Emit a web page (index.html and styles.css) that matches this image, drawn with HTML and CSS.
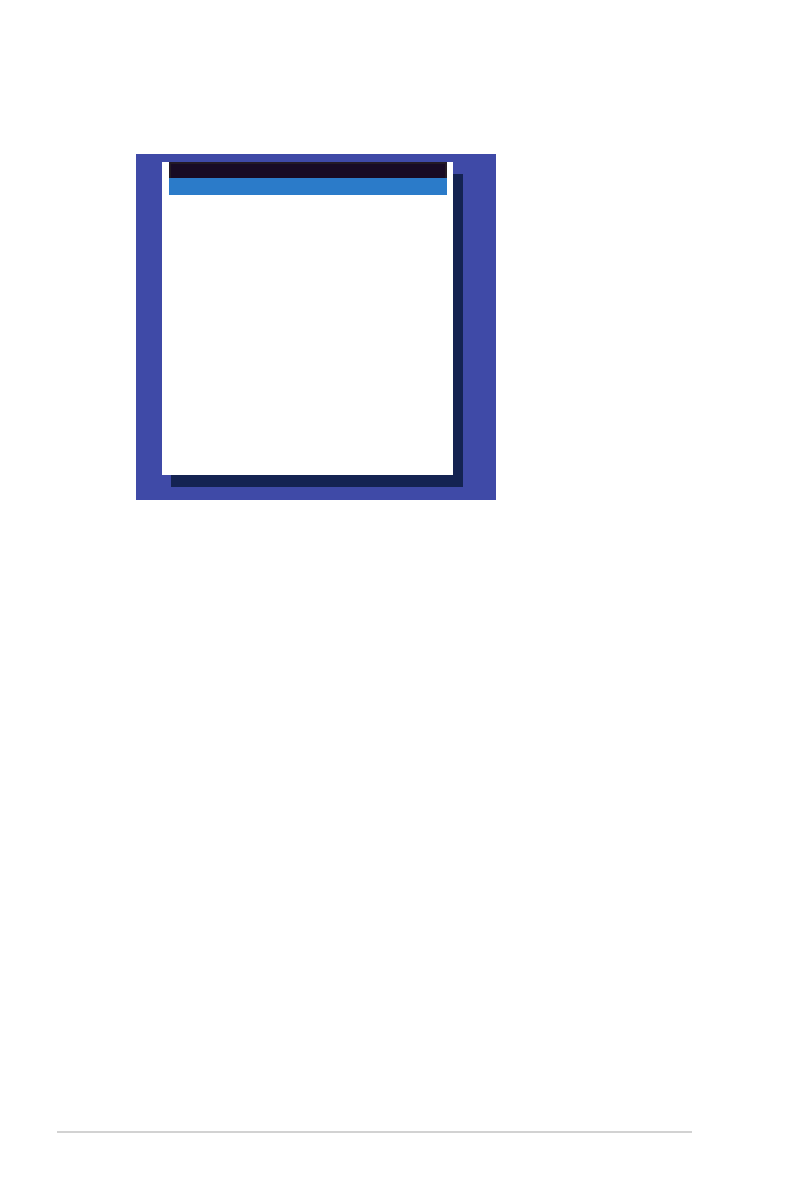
FILE: index.html
```html
<!DOCTYPE html>
<html lang="en">
<head>
<meta charset="utf-8">
<meta name="viewport" content="width=device-width, initial-scale=1">
<link rel="stylesheet" href="styles.css">
</head>
<body>
<div class="page">
  <main class="content">
    <figure class="screen">
      <div class="dialog">
        <div class="dialog-title"></div>
        <div class="dialog-selection"></div>
      </div>
    </figure>
  </main>
  <footer class="footer">
    <hr class="rule">
  </footer>
</div>
</body>
</html>
```
FILE: styles.css
```css
* {
  box-sizing: border-box;
}

body {
  margin: 0;
  background: #fff;
}

.page {
  display: flex;
  flex-direction: column;
  min-height: 100vh;
  padding: 154px 102px 63px 57px;
}

.content {
  flex: 1;
  padding: 0 196px 0 79px;
}

.screen {
  display: flex;
  margin: 0;
  padding: 8px 43px 25px 26px;
  aspect-ratio: 360 / 346;
  background: #3f4aa7;
}

.dialog {
  flex: 1;
  padding: 0 6px 0 7px;
  background: #fff;
  box-shadow: 9px 12px 0 #142352, 10px 12px 0 #142352;
}

.dialog-title {
  height: 16px;
  border: 2px solid #231a25;
  border-bottom: 0;
  background: #180b24;
}

.dialog-selection {
  height: 17px;
  background: #2b7bc9;
}

.rule {
  height: 2px;
  margin: 0;
  border: 0;
  background: #d2d2d2;
}
```
